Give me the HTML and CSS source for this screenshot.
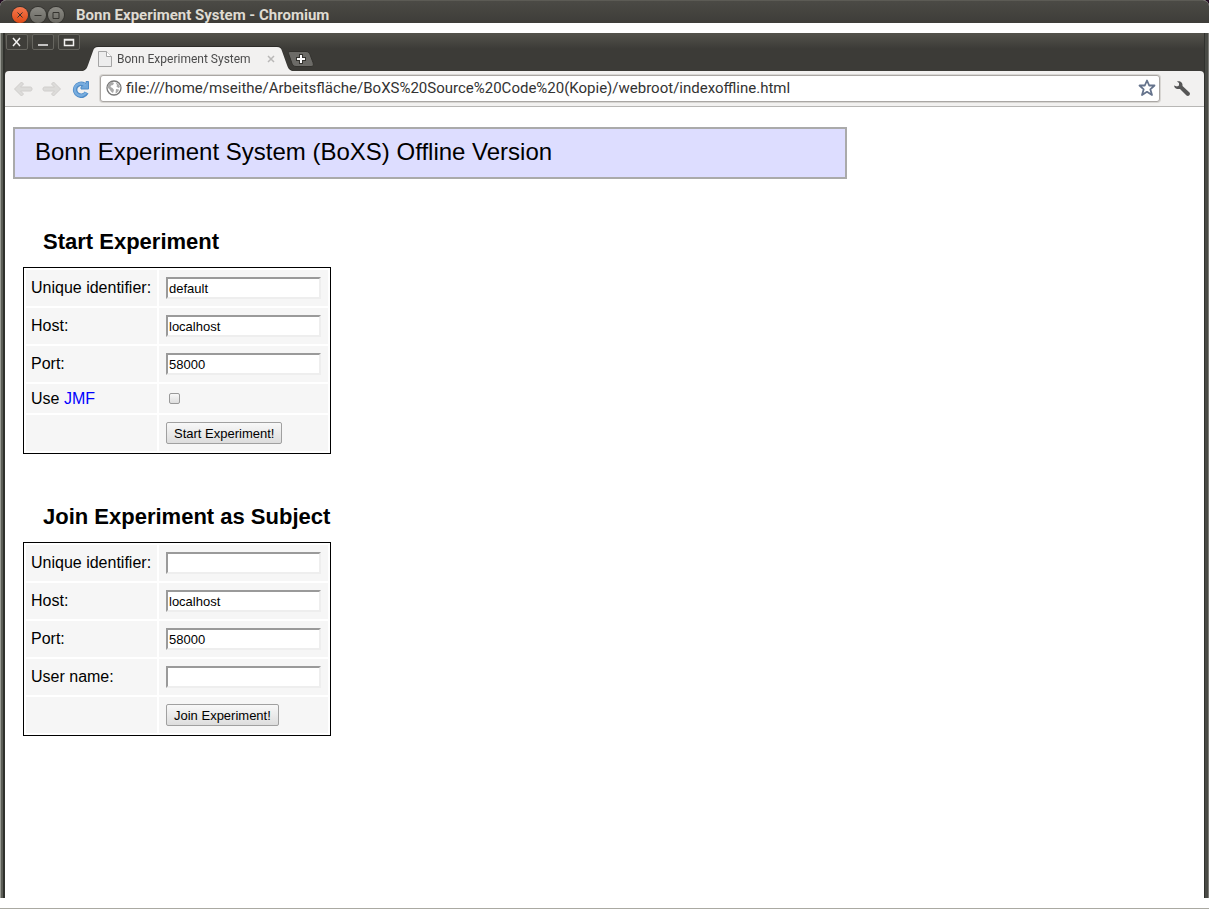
FILE: index.html
```html
<!DOCTYPE html>
<html lang="en">
<head>
<meta charset="utf-8">
<title>Bonn Experiment System - Chromium</title>
<link rel="stylesheet" href="styles.css">
</head>
<body>
<header class="titlebar">
  <button class="orb orb-close" aria-label="Close"><svg width="16" height="16" viewBox="0 0 16 16"><path d="M5.5 5.500l5 5M10.5 5.500l-5 5"/></svg></button>
  <button class="orb" aria-label="Minimize"><svg width="16" height="16" viewBox="0 0 16 16"><path d="M4.500 8.500h7"/></svg></button>
  <button class="orb" aria-label="Maximize"><svg width="16" height="16" viewBox="0 0 16 16"><path d="M5 5.500h6v6H5z"/></svg></button>
  <span class="caption">Bonn Experiment System - Chromium</span>
</header>
<div class="window">
  <div class="tabstrip">
    <div class="controls">
      <button class="control" aria-label="Close window"><svg width="20" height="14" viewBox="0 0 20 14"><path d="M6 3l7 8M13 3l-7 8"/></svg></button>
      <button class="control" aria-label="Minimize window"><svg width="20" height="14" viewBox="0 0 20 14"><path d="M5 10h10" stroke-width="2"/></svg></button>
      <button class="control" aria-label="Maximize window"><svg width="20" height="14" viewBox="0 0 20 14"><path d="M5.500 4.500h9v6h-9zM5 5h10"/></svg></button>
    </div>
    <div class="tab">
      <svg width="15" height="24" viewBox="0 0 15 24"><path d="M0 24c3-1 4-3 5-6L10 4c1-3 2-4 5-4v24z" fill="#f2f1f0"/></svg>
      <div class="tab-body">
        <svg width="14" height="16" viewBox="0 0 14 16"><path d="M.5.5h8l5 5v10H.5z" fill="#ededed" stroke="#a5a5a5"/><path d="M8.500.5v5h5" fill="#fff" stroke="#a5a5a5"/></svg>
        <span class="tab-title">Bonn Experiment System</span>
        <button class="tab-close" aria-label="Close tab"><svg width="8" height="8" viewBox="0 0 8 8"><path d="M1 1l6 6M7 1L1 7" stroke="#b9b8b7" stroke-width="1.500"/></svg></button>
      </div>
      <svg width="15" height="24" viewBox="0 0 15 24"><path d="M15 24c-3-1-4-3-5-6L5 4C4 1 3 0 0 0v24z" fill="#f2f1f0"/></svg>
    </div>
    <button class="new-tab" aria-label="New tab"><svg width="26" height="16" viewBox="0 0 26 16"><path d="M2 .5h16c2 0 3 1 4 3l3 8c1 3 0 4-2 4H8c-2 0-3-1-4-3L1 4C0 2 0 .5 2 .5z" fill="#6c6b67" stroke="#33322e"/><path d="M13 3v10M8 8h10" stroke="#33322e" stroke-width="4"/><path d="M13 4v8M9 8h8" stroke="#fff" stroke-width="2"/></svg></button>
  </div>
  <nav class="toolbar">
    <button class="tool" aria-label="Back"><svg width="20" height="18" viewBox="0 0 20 18"><path d="M8.500 2L1.500 9l7 7 2-2-3-3h10c2 0 2-4 0-4h-10l3-3z" fill="#dcdbd9" stroke="#d0cecc"/></svg></button>
    <button class="tool" aria-label="Forward"><svg width="20" height="18" viewBox="0 0 20 18"><path d="M11.500 2l7 7-7 7-2-2 3-3h-10c-2 0-2-4 0-4h10l-3-3z" fill="#dcdbd9" stroke="#d0cecc"/></svg></button>
    <button class="tool reload" aria-label="Reload"><svg width="18" height="18" viewBox="0 0 18 18"><path d="M14.500 12.500a6 6 0 1 1-2.500-8" fill="none" stroke="#4f8cc8" stroke-width="4.500"/><path d="M16.500 1.500v7.500H9V7l2-1.500 3-2.500V1.500z" fill="#6fa6da" stroke="#4f8cc8"/><path d="M14 12.500a6 6 0 1 1-2-8l2 1" fill="none" stroke="#78addf" stroke-width="2.500"/></svg></button>
    <div class="omnibox">
      <svg width="16" height="16" viewBox="0 0 16 16"><circle cx="8" cy="8" r="7" fill="#fff" stroke="#777" stroke-width="1.300"/><path d="M2 6c0-2 2-4 4-4l2 1-1 2-2 .5L4.500 7l2 1 1.500 2-1 3C4.500 12 4 9 2 8zM9.500 2.500C12 3 13.500 5 14 7l-1.500 1-2-1.500.5-1.500zM10 9l3 .5c-.5 2-2 3.500-3.500 4z" fill="#aaa"/></svg>
      <input class="url" type="text" aria-label="Address" value="file:///home/mseithe/Arbeitsfläche/BoXS%20Source%20Code%20(Kopie)/webroot/indexoffline.html">
      <button class="star" aria-label="Bookmark this page"><svg width="18" height="18" viewBox="0 0 18 18"><path d="M9 1.500l2.200 5h5.300l-4.200 3.800 1.700 5.700L9 12.800 4 16l1.700-5.700L1.500 6.500h5.300z" fill="#fff" stroke="#65738c" stroke-width="1.800" stroke-linejoin="round"/></svg></button>
    </div>
    <button class="tool wrench" aria-label="Menu"><svg width="18" height="18" viewBox="0 0 18 18"><path d="M4 1.500c3-1 6 1 5.500 4.500l7 6.500c1.500 2-1 4.500-3 3L7 9C4 9.500 1.500 8.500 1 5.500l3 1 2-1V3z" fill="#565656"/></svg></button>
  </nav>
  <main class="page">
    <h1 class="banner">Bonn Experiment System (BoXS) Offline Version</h1>
    <form class="experiment">
      <h2 class="heading">Start Experiment</h2>
      <table class="fields">
        <tr><td class="name"><label for="start-id">Unique identifier:</label></td><td class="entry"><input class="field" id="start-id" type="text" value="default"></td></tr>
        <tr><td class="name"><label for="start-host">Host:</label></td><td class="entry"><input class="field" id="start-host" type="text" value="localhost"></td></tr>
        <tr><td class="name"><label for="start-port">Port:</label></td><td class="entry"><input class="field" id="start-port" type="text" value="58000"></td></tr>
        <tr><td class="name"><label for="start-jmf">Use</label> <a class="link" href="#jmf">JMF</a></td><td class="entry"><input class="check" id="start-jmf" type="checkbox"></td></tr>
        <tr><td class="name"></td><td class="entry"><button class="submit" type="button">Start Experiment!</button></td></tr>
      </table>
    </form>
    <form class="experiment">
      <h2 class="heading">Join Experiment as Subject</h2>
      <table class="fields">
        <tr><td class="name"><label for="join-id">Unique identifier:</label></td><td class="entry"><input class="field" id="join-id" type="text"></td></tr>
        <tr><td class="name"><label for="join-host">Host:</label></td><td class="entry"><input class="field" id="join-host" type="text" value="localhost"></td></tr>
        <tr><td class="name"><label for="join-port">Port:</label></td><td class="entry"><input class="field" id="join-port" type="text" value="58000"></td></tr>
        <tr><td class="name"><label for="join-user">User name:</label></td><td class="entry"><input class="field" id="join-user" type="text"></td></tr>
        <tr><td class="name"></td><td class="entry"><button class="submit" type="button">Join Experiment!</button></td></tr>
      </table>
    </form>
  </main>
</div>
</body>
</html>
```
FILE: styles.css
```css
* { box-sizing: border-box; }
body {
  margin: 0;
  min-height: 100vh;
  display: flex;
  flex-direction: column;
  gap: 10px;
  padding-bottom: 10px;
  border-bottom: 1px solid #aaa9a2;
  background: #fff;
  font-family: "Liberation Sans", Arial, sans-serif;
}
button { margin: 0; padding: 0; border: 0; background: none; }
svg { display: block; flex: none; }

.titlebar {
  display: flex;
  align-items: flex-start;
  gap: 2px;
  padding: 6px 12px 0;
  border-top: 1px solid #5c5b55;
  border-radius: 6px 6px 0 0;
  background: linear-gradient(#4b4a45, #3e3d39);
  box-shadow: 0 -6px 0 6px #210a20;
  clip-path: inset(0);
}
.orb {
  width: 16px;
  height: 16px;
  border-radius: 50%;
  background: linear-gradient(#8b8a84, #696862);
  box-shadow: 0 0 0 1px #34332f;
}
.orb-close { background: linear-gradient(#f4784f, #df4b17); }
.orb path { fill: none; stroke: #34332f; stroke-width: 1; }
.caption {
  padding-left: 10px;
  font: bold 15px/16px Roboto, sans-serif;
  color: #dfdbd2;
  white-space: nowrap;
}

.window {
  flex: 1;
  display: flex;
  flex-direction: column;
  border: solid #3c3b37;
  border-width: 0 5px;
  border-image: linear-gradient(90deg, #999b94 0 1px, #5b5d56 1px 3px, #30312d 3px 5px, #30312d calc(100% - 5px) calc(100% - 4px), #494a45 calc(100% - 4px) calc(100% - 1px), #7c7c77 calc(100% - 1px)) 0 5 / 0 5px;
  background: #3c3b37;
}
.tabstrip {
  display: flex;
  align-items: flex-end;
  height: 38px;
  background: linear-gradient(#54534c, #3c3b37 16px);
}
.controls { display: flex; gap: 4px; align-self: flex-start; padding: 1px 3px 0 1px; }
.control {
  height: 16px;
  border: 1px solid #66655f;
  border-radius: 2px;
  background: #3f3e3a;
}
.control path { fill: none; stroke: #f2f1f0; stroke-width: 1.5; }
.tab { display: flex; filter: drop-shadow(0 -1px 0 #2c2b28); }
.tab-body {
  display: flex;
  align-items: center;
  gap: 5px;
  height: 24px;
  background: #f2f1f0;
}
.tab-title { width: 143px; font: 12px/16px Roboto, sans-serif; color: #4c4c4c; white-space: nowrap; }
.tab-close { padding: 0 2px; }
.new-tab { margin-left: -4px; padding-bottom: 4px; }

.toolbar {
  display: flex;
  align-items: center;
  gap: 9px;
  height: 36px;
  padding: 0 13px 0 8px;
  border-bottom: 1px solid #b8b7b5;
  border-radius: 4px 4px 0 0;
  background: #f2f1f0;
}
.reload { padding: 0 1px; }
.omnibox {
  flex: 1;
  display: flex;
  align-items: center;
  gap: 4px;
  height: 27px;
  padding: 0 3px 1px 5px;
  border: 1px solid #aaa7a4;
  border-radius: 3px;
  background: #fff;
  box-shadow: 0 0 0 1px #d8d6d3;
}
.url {
  flex: 1;
  min-width: 0;
  padding: 0;
  border: 0;
  background: none;
  font: 15px/20px Roboto, sans-serif;
  color: #333;
}
.wrench { margin-left: 4px; }

.page { flex: 1; padding: 20px 8px; background: #fff; }
.banner {
  max-width: 834px;
  margin: 0 0 48px;
  padding: 9px 20px 11px;
  border: 2px solid #aaa;
  background: #ddf;
  font-size: 24px;
  line-height: 28px;
  font-weight: normal;
  color: #000;
}
.experiment { margin: 0 0 48px 10px; }
.heading { margin: 0 0 10px; padding: 0 20px; font-size: 22px; line-height: 30px; }
.fields { border: 1px solid #000; border-spacing: 2px; font-size: 16px; line-height: 18px; }
.fields td { background: #f6f6f6; vertical-align: middle; }
.fields .name { min-width: 131px; padding: 5px; }
.fields .entry { padding: 7px; }
.field {
  display: block;
  width: 155px;
  height: 22px;
  padding: 1px;
  border: 2px solid;
  border-color: #9a9a9a #eee #eee #9a9a9a;
  background: #fff;
  font: 13px/16px "Liberation Sans", Arial, sans-serif;
  color: #000;
}
.link { color: #00f; text-decoration: none; }
.check {
  appearance: none;
  display: block;
  width: 11px;
  height: 11px;
  margin: 2px 3px;
  border: 1px solid #999;
  border-radius: 2px;
  background: linear-gradient(#f8f8f8, #ddd);
}
.submit {
  display: block;
  height: 22px;
  padding: 1px 7px 0;
  border: 1px solid #a0a0a0;
  border-radius: 2px;
  background: linear-gradient(#f8f8f8, #ddd);
  font: 13px/18px "Liberation Sans", Arial, sans-serif;
  color: #000;
}
```
